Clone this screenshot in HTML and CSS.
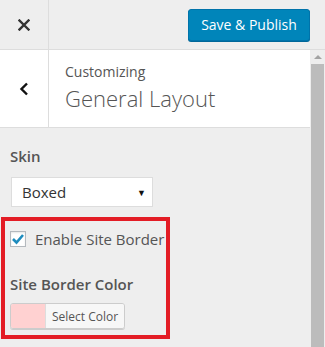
FILE: index.html
```html
<!DOCTYPE html>
<html>
<head>
<meta charset="utf-8">
<link rel="stylesheet" href="styles.css">
</head>
<body>
<div class="header">
  <div class="close">
    <svg width="12" height="12" viewBox="0 0 12 12"><path d="M1.5 1.5 L10.5 10.5 M10.5 1.5 L1.5 10.5" stroke="#333" stroke-width="2.4" stroke-linecap="square"/></svg>
  </div>
  <div class="spacer"></div>
  <button class="publish">Save &amp; Publish</button>
</div>
<div class="below">
  <div class="main">
    <div class="section-head">
      <div class="back">
        <svg width="10" height="14" viewBox="0 0 10 14"><path d="M8 1.5 L2.5 7 L8 12.5" fill="none" stroke="#111" stroke-width="2.4"/></svg>
      </div>
      <div class="titles">
        <div class="customizing">Customizing</div>
        <div class="title">General Layout</div>
      </div>
    </div>
    <div class="content">
      <div class="label">Skin</div>
      <div class="select"><span>Boxed</span><span class="arrow">▼</span></div>
      <div class="highlight">
        <div class="check-row">
          <span class="checkbox">
            <svg width="14" height="12" viewBox="0 0 14 12"><path d="M2 6 L5.5 9.5 L12 2" fill="none" stroke="#1e8cbe" stroke-width="2.6"/></svg>
          </span>
          <span class="check-label">Enable Site Border</span>
        </div>
        <div class="label color-label">Site Border Color</div>
        <div class="color-btn"><span class="swatch"></span><span class="color-text">Select Color</span></div>
      </div>
    </div>
  </div>
  <div class="scrollbar">
    <div class="up"></div>
    <div class="thumb"></div>
  </div>
</div>
</body>
</html>
```
FILE: styles.css
```css
html, body { margin: 0; padding: 0; }
body {
  width: 325px;
  height: 347px;
  overflow: hidden;
  background: #eee;
  font-family: "Open Sans", sans-serif;
  color: #555;
}
.header {
  display: flex;
  align-items: center;
  height: 49px;
  border-bottom: 1px solid #ddd;
}
.close {
  width: 48px;
  height: 49px;
  border-right: 1px solid #ddd;
  display: flex;
  align-items: center;
  justify-content: center;
}
.spacer { flex: 1; }
.publish {
  width: 122px;
  height: 32px;
  margin-right: 15px;
  background: #0085ba;
  border: 1px solid #0073aa;
  border-radius: 3px;
  color: #fff;
  font-family: "Open Sans", sans-serif;
  font-size: 14px;
  padding: 0;
  box-shadow: 0 1px 0 #006799;
}
.below {
  display: flex;
  height: 297px;
}
.main {
  width: 310px;
}
.section-head {
  display: flex;
  height: 77px;
  background: #fff;
  border-bottom: 1px solid #ddd;
}
.back {
  width: 48px;
  border-right: 1px solid #ddd;
  display: flex;
  align-items: center;
  justify-content: center;
}
.titles {
  padding-left: 16px;
  padding-top: 12px;
}
.customizing {
  font-size: 14px;
  line-height: 20px;
  color: #555;
}
.title {
  font-size: 22px;
  font-weight: 300;
  line-height: 32px;
  color: #555;
}
.content {
  padding: 18px 0 0 0;
}
.label {
  font-size: 15px;
  font-weight: 600;
  line-height: 20px;
  margin-left: 10px;
  color: #555;
}
.select {
  margin: 11px 0 0 11px;
  height: 28px;
  background: #fff;
  border: 1px solid #ddd;
  display: flex;
  align-items: center;
  justify-content: space-between;
  padding: 0 0 0 10px;
  box-sizing: content-box;
  width: 130px;
  font-size: 15px;
  color: #333;
}
.select .arrow {
  font-size: 9px;
  color: #111;
  margin-right: 6px;
}
.highlight {
  margin: 10px 0 0 1px;
  width: 161px;
  height: 114px;
  border: 4px solid #e31c25;
}
.check-row {
  display: flex;
  align-items: center;
  margin: 8px 0 0 5px;
}
.checkbox {
  width: 16px;
  height: 16px;
  border: 1px solid #b4b9be;
  background: #fff;
  box-shadow: inset 0 1px 2px rgba(0,0,0,0.1);
  display: flex;
  align-items: center;
  justify-content: center;
  box-sizing: border-box;
}
.check-label {
  margin-left: 9px;
  font-size: 15px;
  color: #555;
}
.color-label {
  margin: 25px 0 0 5px;
}
.color-btn {
  display: flex;
  margin: 9px 0 0 5px;
  width: 115px;
  height: 26px;
  border: 1px solid #ccc;
  border-radius: 3px;
  box-shadow: 0 1px 0 #ccc;
  overflow: hidden;
  box-sizing: border-box;
}
.swatch {
  width: 34px;
  background: #ffd1d1;
  border-right: 1px solid #ddd;
}
.color-text {
  flex: 1;
  background: #f7f7f7;
  font-size: 12px;
  color: #555;
  display: flex;
  align-items: center;
  justify-content: center;
}
.scrollbar {
  width: 15px;
  display: flex;
  flex-direction: column;
  align-items: center;
}
.up {
  margin-top: 5px;
  width: 0;
  height: 0;
  border-left: 4px solid transparent;
  border-right: 4px solid transparent;
  border-bottom: 4px solid #a3a3a3;
}
.thumb {
  margin-top: 5px;
  width: 13px;
  flex: 1;
  background: #bcbcbc;
}
```
